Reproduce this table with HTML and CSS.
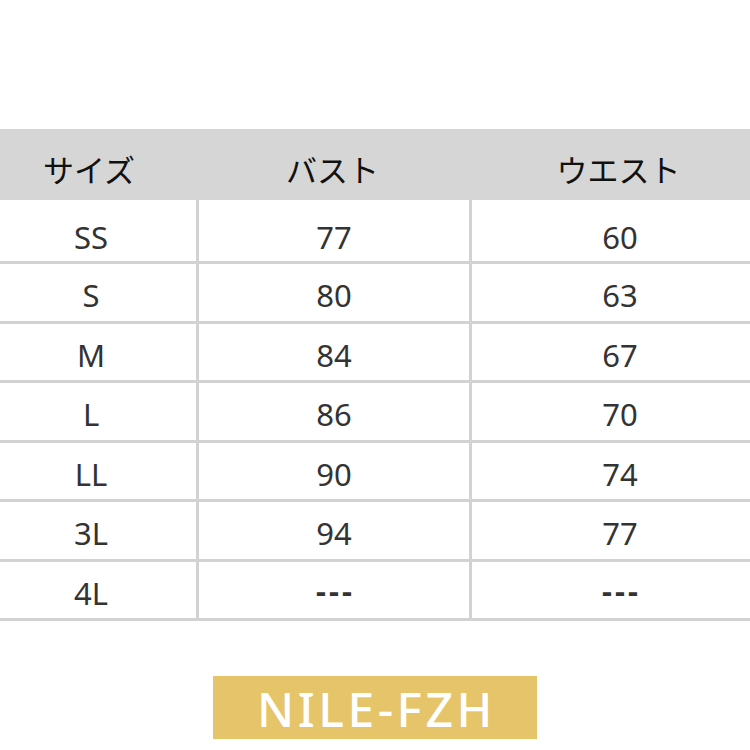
FILE: index.html
```html
<!DOCTYPE html>
<html lang="ja">
<head>
<meta charset="utf-8">
<title>サイズ表</title>
<link rel="stylesheet" href="styles.css">
</head>
<body>
<div class="page">
  <div class="table">
    <div class="cell head c1">サイズ</div>
    <div class="cell head c2">バスト</div>
    <div class="cell head c3">ウエスト</div>

    <div class="cell r first c1">SS</div>
    <div class="cell r first c2">77</div>
    <div class="cell r first c3">60</div>

    <div class="cell r c1">S</div>
    <div class="cell r c2">80</div>
    <div class="cell r c3">63</div>

    <div class="cell r c1">M</div>
    <div class="cell r c2">84</div>
    <div class="cell r c3">67</div>

    <div class="cell r c1">L</div>
    <div class="cell r c2">86</div>
    <div class="cell r c3">70</div>

    <div class="cell r c1">LL</div>
    <div class="cell r c2">90</div>
    <div class="cell r c3">74</div>

    <div class="cell r c1">3L</div>
    <div class="cell r c2">94</div>
    <div class="cell r c3">77</div>

    <div class="cell r c1">4L</div>
    <div class="cell r c2 dash">---</div>
    <div class="cell r c3 dash">---</div>
  </div>
  <div class="badge-wrap">
    <div class="badge">NILE-FZH</div>
  </div>
</div>
</body>
</html>
```
FILE: styles.css
```css
html, body {
  margin: 0;
  padding: 0;
  background: #ffffff;
}

.page {
  width: 750px;
  height: 750px;
  padding-top: 129px;
  box-sizing: border-box;
  font-family: "Noto Sans", "Noto Sans CJK JP", sans-serif;
}

.table {
  display: grid;
  grid-template-columns: 196px 273px 1fr;
  grid-template-rows: 71px 64px repeat(6, 59.5px);
}

.cell {
  display: flex;
  align-items: center;
  justify-content: center;
  box-sizing: border-box;
}

.head {
  background: #d6d6d6;
  color: #111111;
  font-family: "Noto Sans CJK JP", "Noto Sans", sans-serif;
  font-size: 31px;
  font-weight: 400;
  padding-top: 8px;
}

.head.c1 {
  padding-right: 18px;
}

.head.c3 {
  padding-left: 18px;
}

.r {
  color: #333333;
  font-size: 31px;
  border-bottom: 3px solid #d2d2d2;
  padding-top: 6px;
}

.r.first {
  padding-top: 13px;
}

.r.c1 {
  padding-right: 14px;
}

.r.c2, .r.c3 {
  border-left: 3px solid #d2d2d2;
}

.r.c3 {
  padding-left: 18px;
}

.dash {
  font-weight: 700;
  letter-spacing: 3px;
  padding-left: 3px;
  padding-top: 0;
}

.r.c3.dash {
  padding-left: 21px;
}

.badge-wrap {
  display: flex;
  justify-content: center;
  padding-top: 55px;
}

.badge {
  width: 324px;
  height: 63px;
  background: #e5c46a;
  color: #ffffff;
  font-family: "Noto Sans", sans-serif;
  font-size: 48px;
  font-weight: 500;
  letter-spacing: 3.5px;
  display: flex;
  align-items: center;
  justify-content: center;
  line-height: 1;
  padding-top: 2px;
  padding-left: 3px;
  box-sizing: border-box;
}
```
